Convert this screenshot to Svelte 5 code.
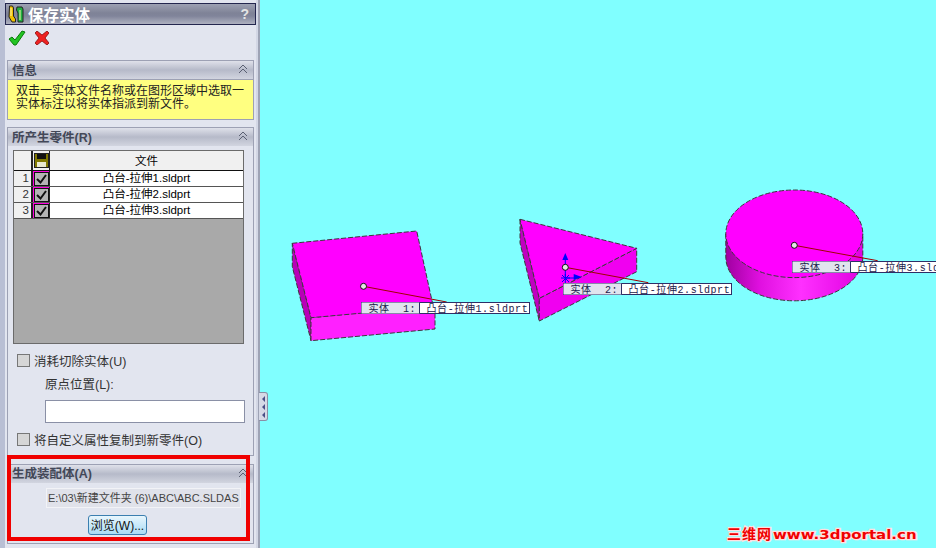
<script>
  const rows = [1, 2, 3];
  const cjk = '"Liberation Sans", "Noto Sans CJK SC", sans-serif';
</script>

<div class="app" style:font-family={cjk}>
  <div class="strip"></div>
  <aside class="panel">
    <header class="title">
      <svg class="logo" width="18" height="18" viewBox="0 0 18 18">
        <path d="M2.5 1h3l1 2v8l2 3v3H5L2 12z" fill="#f0c000" stroke="#222" stroke-width="1"/>
        <path d="M10 2h5l1 2v13h-5V8L9.500 5z" fill="#20b040" stroke="#222" stroke-width="1"/>
        <path d="M4 3v8M13 5v10" stroke="#fff6b0" stroke-width="1"/>
      </svg>
      <span class="title-text">保存实体</span>
      <span class="help">?</span>
    </header>
    <div class="actions">
      <svg width="18" height="16" viewBox="0 0 18 16"><path d="M1 9l3-2 3 3 7-9 3 1-9 13h-2z" fill="#22c422" stroke="#0a7a0a" stroke-width="1"/></svg>
      <svg width="14" height="14" viewBox="0 0 14 14"><path d="M2 0l5 4 5-4 2 2-4 5 4 5-2 2-5-4-5 4-2-2 4-5-4-5z" fill="#ee2222" stroke="#8a0a0a" stroke-width=".8"/></svg>
    </div>

    <section class="group info">
      <div class="ghead"><span>信息</span><svg class="chev" width="10" height="10" viewBox="0 0 10 10"><path d="M1 5l4-4 4 4M1 9l4-4 4 4" fill="none" stroke="#5a6072" stroke-width="1"/></svg></div>
      <p class="note">双击一实体文件名称或在图形区域中选取一<br/>实体标注以将实体指派到新文件。</p>
    </section>

    <section class="group parts">
      <div class="ghead"><span>所产生零件(R)</span><svg class="chev" width="10" height="10" viewBox="0 0 10 10"><path d="M1 5l4-4 4 4M1 9l4-4 4 4" fill="none" stroke="#5a6072" stroke-width="1"/></svg></div>
      <div class="grid-wrap">
        <div class="grow ghdr">
          <div class="num"></div>
          <div class="ico">
            <svg width="15" height="15" viewBox="0 0 15 15"><rect x=".5" y=".5" width="14" height="14" fill="#807800" stroke="#222"/><rect x="3" y="1" width="9" height="5" fill="#111"/><rect x="3" y="9" width="9" height="5" fill="#e9e9d0"/></svg>
          </div>
          <div class="file">文件</div>
        </div>
        {#each rows as r}
          <div class="grow">
            <div class="num">{r}</div>
            <div class="ico chk">
              <svg width="15" height="14" viewBox="0 0 15 14"><rect x="0" y="0" width="15" height="14" fill="#b4b4b4" stroke="#111" stroke-width="2"/><path d="M3 7l3.500 3.500L12 3" fill="none" stroke="#111" stroke-width="2"/></svg>
            </div>
            <div class="file">凸台-拉伸{r}.sldprt</div>
          </div>
        {/each}
        <div class="rest"></div>
      </div>
      <label class="check first"><i></i>消耗切除实体(U)</label>
      <div class="origin">原点位置(L):</div>
      <div class="input"></div>
      <label class="check"><i></i>将自定义属性复制到新零件(O)</label>
    </section>

    <section class="group asm">
      <div class="ghead"><span>生成装配体(A)</span><svg class="chev" width="10" height="10" viewBox="0 0 10 10"><path d="M1 5l4-4 4 4M1 9l4-4 4 4" fill="none" stroke="#5a6072" stroke-width="1"/></svg></div>
      <div class="path">E:\03\新建文件夹 (6)\ABC\ABC.SLDAS</div>
      <button class="browse">浏览(W)...</button>
    </section>
    <div class="redbox"></div>
  </aside>

  <div class="splitter">
    <div class="handle">
      <svg width="7" height="27" viewBox="0 0 7 27"><path d="M5 3v6L2 6zM5 11v6L2 14zM5 19v6L2 22z" fill="#4a4f86"/></svg>
    </div>
  </div>

  <main class="canvas">
    <svg width="676" height="548" viewBox="260 0 676 548">
      <defs>
        <linearGradient id="cyl" x1="0" x2="1" y1="0" y2="0">
          <stop offset="0" stop-color="#a000a0"/>
          <stop offset=".25" stop-color="#e010e0"/>
          <stop offset=".55" stop-color="#ff30ff"/>
          <stop offset="1" stop-color="#e000e0"/>
        </linearGradient>
      </defs>

      <g class="edges">
        <polygon points="292.3,243.3 311,317.7 311,340.7 292.3,266.7" fill="#b800b8"/>
        <polygon points="311,317.7 435,305 435,329 311,340.7" fill="#ff20ff"/>
        <polygon points="292.3,243.3 416.7,231 433.3,306.7 311,317.7" fill="#ff00ff"/>

        <polygon points="520,219.3 539.3,298.3 539.3,321 520,243" fill="#c000c0"/>
        <polygon points="539.3,298.3 636.7,248.3 636.7,271.700 539.3,321" fill="#f000f0"/>
        <polygon points="520,219.3 636.7,248.3 539.3,298.3" fill="#ff00ff"/>

        <path d="M725.8 233.8V257A68.5 43.8 0 0 0 862.8 257V233.8z" fill="url(#cyl)"/>
        <ellipse cx="794.3" cy="233.8" rx="68.5" ry="43.8" fill="#ff00ff"/>
      </g>

      <g class="axes">
        <path d="M565.3 278V258M565.3 278H574" stroke="#0000ff" fill="none"/>
        <path d="M565.3 253l-3 7h6zM581.7 277l-8-3v6z" fill="#0000ff"/>
        <path d="M561 278h9M565.3 274v9M562 275l7 7M569 275l-7 7" stroke="#0000ff"/>
      </g>

      <g class="leader">
        <line x1="363.3" y1="286.3" x2="446.7" y2="302"/>
        <line x1="565.3" y1="267.3" x2="648.3" y2="282.7"/>
        <line x1="794.3" y1="245.3" x2="877.7" y2="260.7"/>
      </g>
      <circle class="dot" cx="363.5" cy="286.3" r="3"/>
      <circle class="dot" cx="565.3" cy="267.3" r="3"/>
      <circle class="dot" cx="794.3" cy="245.3" r="3"/>

      {#each [[361.5, 302.5, 1], [563.5, 283.5, 2], [792.5, 261.5, 3]] as [x, y, n]}
        <g class="tag">
          <rect x={x} y={y} width="168" height="11" fill="#fff"/>
          <rect x={x} y={y} width="58" height="11" fill="#e1e4ee"/>
          <line x1={x + 58} x2={x + 58} y1={y} y2={y + 11}/>
          <text x={x + 7} y={y + 9.5}>实体  {n}:</text>
          <text x={x + 65} y={y + 9.5}>凸台-拉伸{n}.sldprt</text>
        </g>
      {/each}

      <text class="mark cn" x="727" y="539">三维网</text>
      <text class="mark" transform="translate(773 539) scale(1.25 1)">www.3dportal.cn</text>
    </svg>
  </main>
</div>

<style>
  :global(body) { margin: 0; overflow: hidden; }
  .app { display: flex; width: 936px; height: 548px; background: #80ffff; overflow: hidden; font-size: 12px; color: #111; }
  .strip { width: 5px; flex: none; background: #b9bfd4; }
  .panel { position: relative; width: 253px; flex: none; background: #e2e5ef; padding-top: 3px; box-sizing: border-box; border-right: 2px solid #d3d7e5; display: flex; flex-direction: column; }
  .title { height: 22px; box-sizing: border-box; border: 1px solid #23264e; background: linear-gradient(#9da1b3, #7f8397 45%, #80849a 60%, #aeb1c0); display: flex; align-items: center; padding-left: 1px; color: #fff; }
  .title-text { font-weight: 700; font-size: 15.500px; margin-left: 3px; }
  .help { margin-left: auto; margin-right: 6px; font-weight: 700; font-size: 14px; color: #e4e4e4; }
  .actions { height: 35px; display: flex; align-items: center; gap: 9px; padding: 0 0 9px 3px; box-sizing: border-box; }
  .group { margin: 0 2px; border: 1px solid #9da1b4; background: #e2e5ef; box-sizing: border-box; }
  .ghead { height: 18px; box-sizing: border-box; display: flex; align-items: center; justify-content: space-between; padding: 0 5px 2px 4px; background: linear-gradient(#dfe1ea, #b6bac9 50%, #d2d5e0); font-weight: 700; font-size: 12.500px; color: #434858; }
  .info { height: 60px; }
  .note { margin: 0; height: 40px; box-sizing: border-box; background: #ffff80; padding: 5px 0 0 8px; font-size: 12px; line-height: 13px; border-top: 1px solid #9da1b4; color: #222; }
  .parts { margin-top: 7px; height: 329px; }
  .grid-wrap { margin: 4px 9px 0 5px; height: 194px; border: 1px solid #6b6b6b; background: #a9a9a9; box-sizing: border-box; display: flex; flex-direction: column; }
  .grow { display: flex; height: 16px; box-sizing: border-box; background: #fff; border-bottom: 1px solid #555; font-size: 11.500px; flex: none; }
  .ghdr { height: 20px; border-bottom: 1px solid #111; background: #f0f0f0; }
  .num { width: 19px; flex: none; background: #f0f0f0; border-right: 2px solid #222; text-align: right; padding-right: 2px; box-sizing: border-box; line-height: 15px; color: #333; }
  .ico { width: 17px; flex: none; display: flex; align-items: center; justify-content: center; border-right: 1px solid #222; background: #f0f0f0; box-sizing: border-box; }
  .chk { background: #ff00e0; }
  .file { flex: 1; text-align: center; line-height: 15px; color: #000; }
  .ghdr .file { line-height: 21px; background: #f0f0f0; }
  .rest { flex: 1; }
  .check { display: flex; align-items: center; gap: 4px; margin-left: 9px; height: 14px; color: #333; font-size: 12.500px; }
  .check i { width: 11px; height: 11px; border: 1px solid #777; background: #d6d6d6; flex: none; }
  .first { margin-top: 9px; }
  .origin { margin: 10px 0 0 37px; color: #333; font-size: 12.500px; line-height: 16px; }
  .input { margin: 7px 0 9px 37px; width: 200px; height: 23px; box-sizing: border-box; background: #fff; border: 1px solid #8a90a6; }
  .asm { margin-top: 8px; height: 80px; }
  .asm .ghead { padding-bottom: 3px; }
  .path { margin: 5px 0 0 38px; width: 195px; height: 20px; box-sizing: border-box; border: 1px solid #f2f3f7; background: #e0e2ea; padding-left: 1px; line-height: 18px; white-space: nowrap; overflow: hidden; color: #444; font-size: 11px; }
  .browse { display: block; margin: 7px 0 0 80px; width: 59px; height: 20px; padding: 0 0 2px; border: 1px solid #3b7fb0; border-radius: 3px; background: linear-gradient(#e8f6fd, #a9dcf5); font: inherit; font-size: 12px; color: #111; }
  .redbox { position: absolute; left: 2px; top: 455px; width: 243px; height: 86px; box-sizing: border-box; border: 4px solid #f00000; }
  .splitter { position: relative; width: 2px; flex: none; background: #9ea3b5; }
  .handle { position: absolute; left: 1px; top: 392px; width: 9px; height: 29px; box-sizing: border-box; background: #d6d9e6; border: 1px solid #8a8fa6; border-left: none; border-radius: 0 3px 3px 0; display: flex; align-items: center; justify-content: center; }
  .canvas { flex: 1; min-width: 0; }
  .canvas svg { display: block; }
  .edges polygon, .edges path, .edges ellipse { stroke: #3a3a3a; stroke-width: 1; stroke-dasharray: 5 2; }
  .leader line { stroke: #a00000; stroke-width: 1; }
  .dot { fill: #e6e6e6; stroke: #111; stroke-width: 1; }
  .tag rect:first-child { stroke: #2e2e66; stroke-width: 1; }
  .tag line { stroke: #2e2e66; }
  .tag text { font-family: "Liberation Mono", "Noto Sans CJK SC", monospace; font-size: 10px; letter-spacing: .6px; white-space: pre; fill: #1a1a4a; }
  .mark { font-family: "DejaVu Sans", sans-serif; font-weight: 700; font-size: 12px; fill: #f00000; stroke: #ffe0e0; stroke-width: 2.500px; paint-order: stroke; }
  .mark.cn { font-family: "Noto Sans CJK SC", sans-serif; font-size: 14px; letter-spacing: 1px; }
</style>
